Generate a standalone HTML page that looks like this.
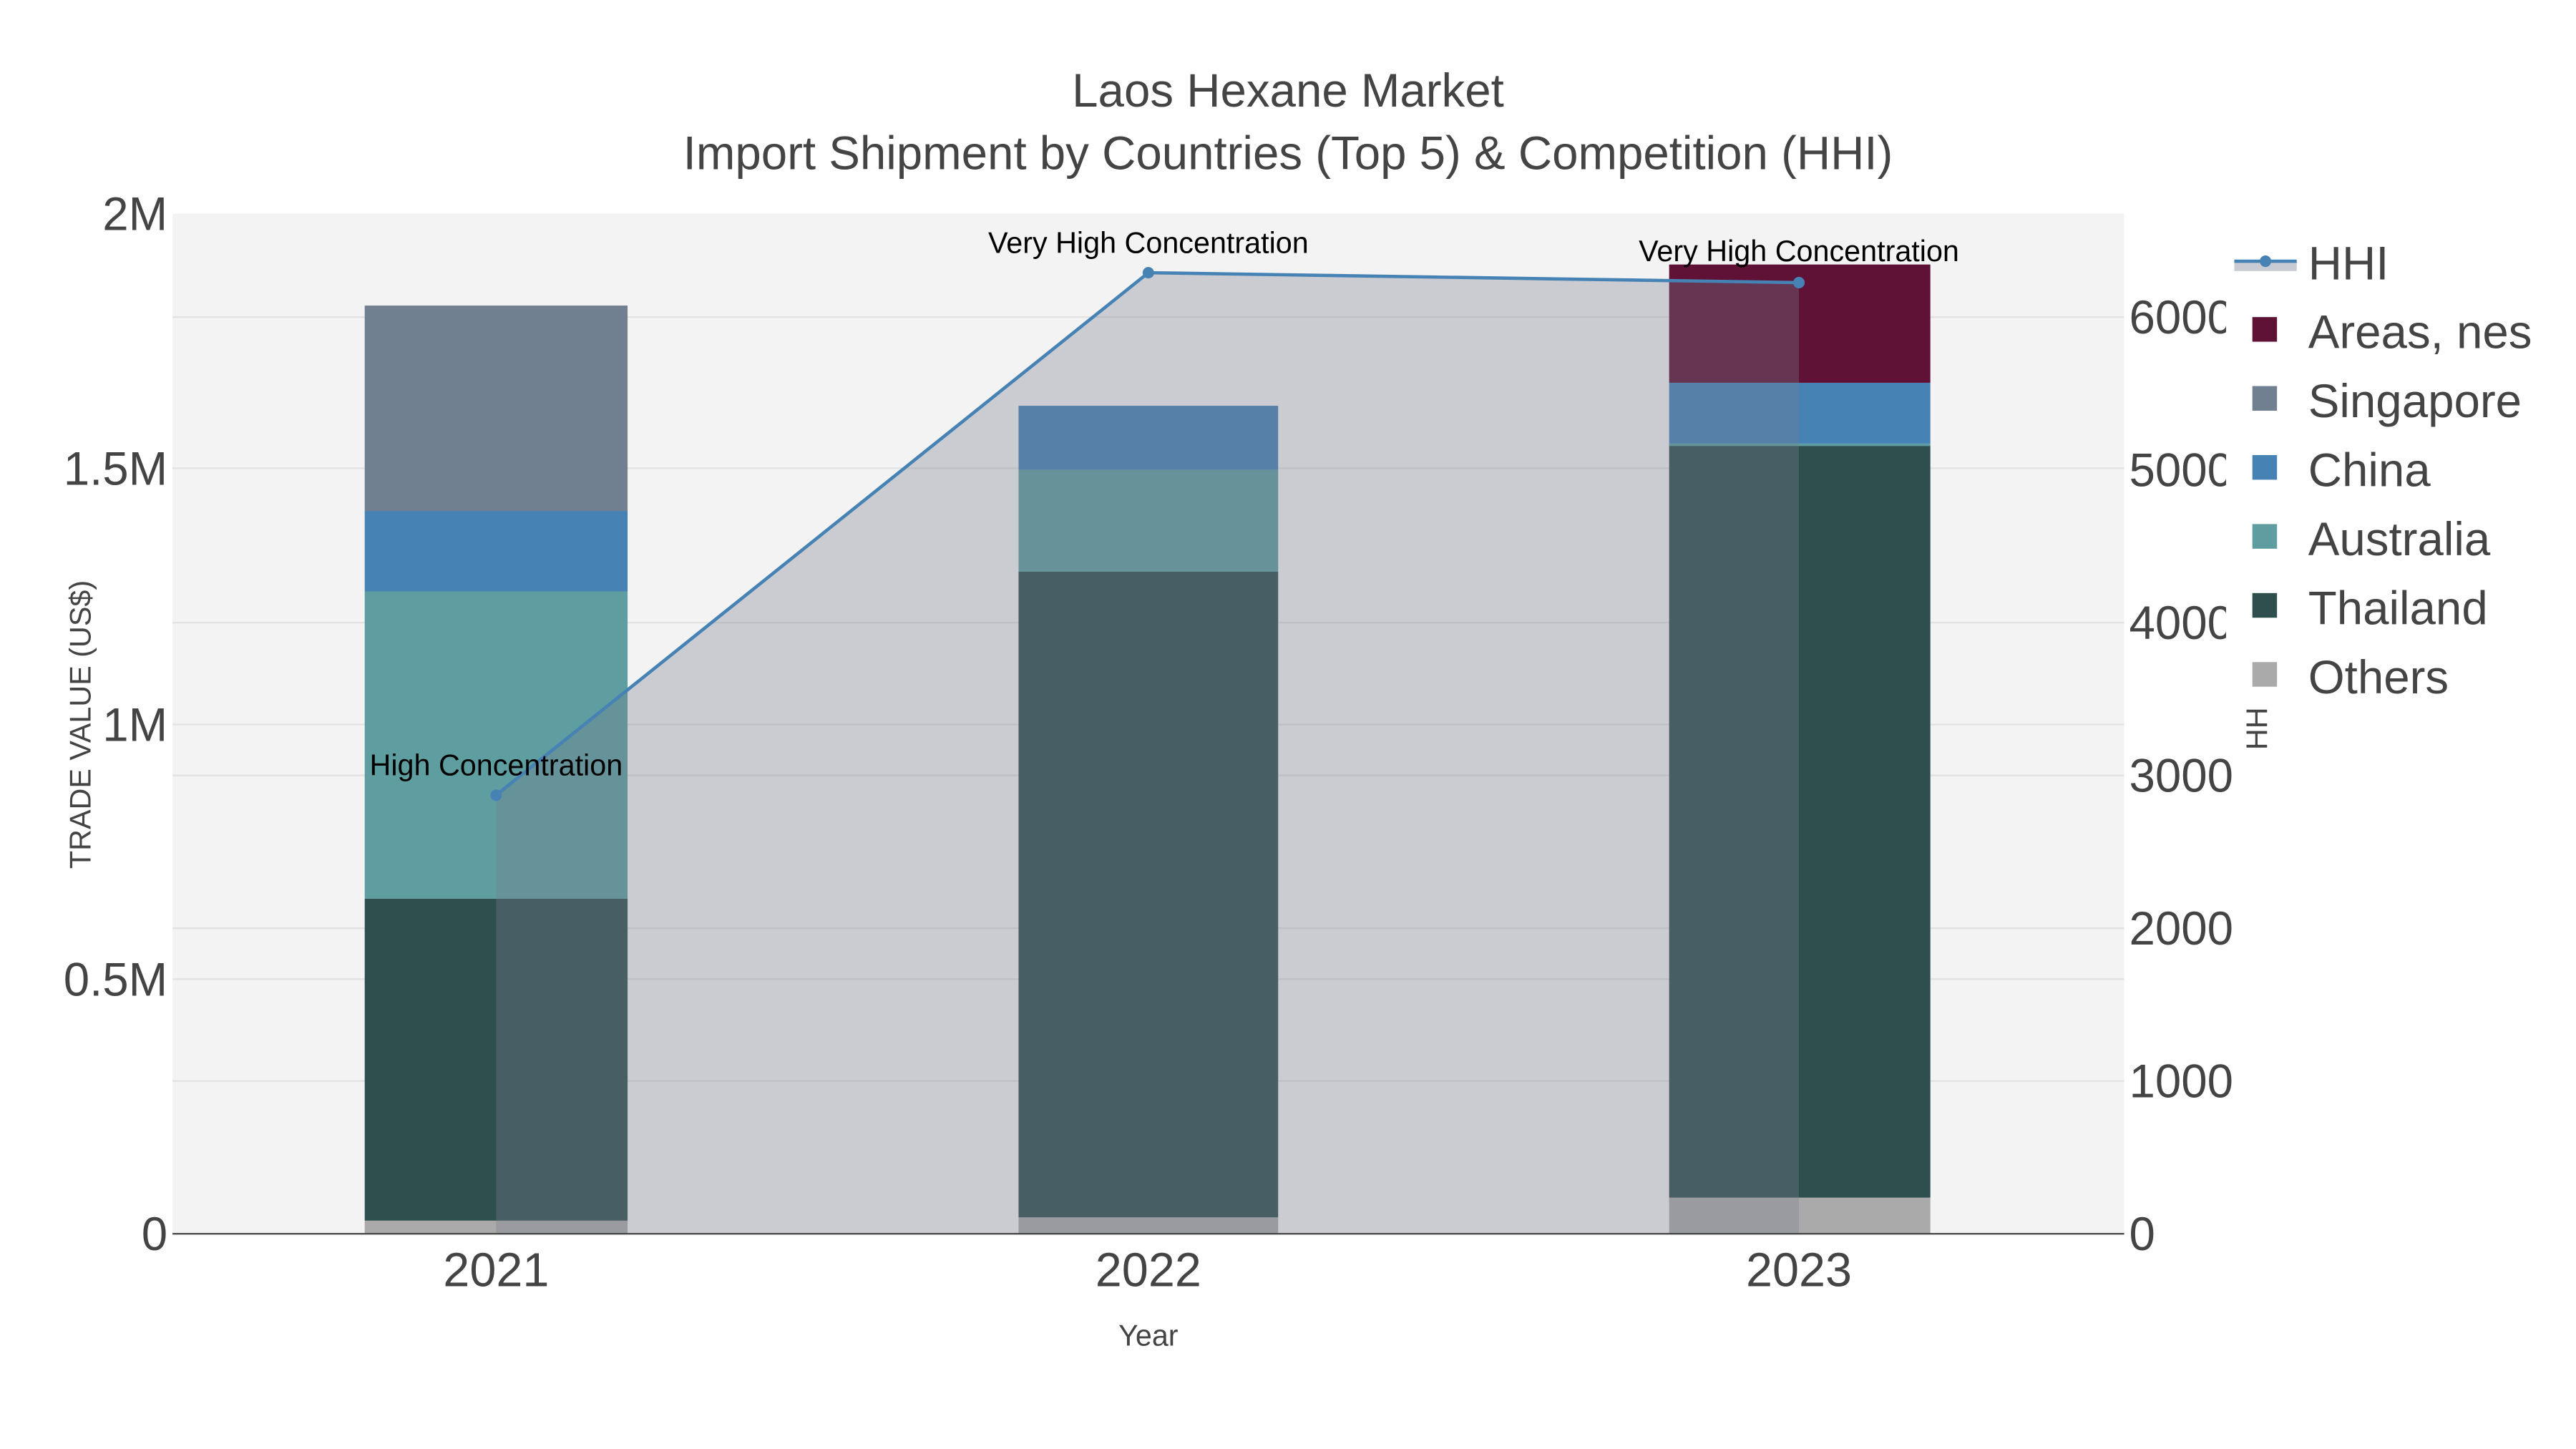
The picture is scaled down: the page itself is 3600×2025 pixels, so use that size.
<!DOCTYPE html>
<html><head><meta charset="utf-8"><style>html,body{margin:0;padding:0;background:#fff}svg{display:block}</style></head>
<body>
<svg width="3600" height="2025" viewBox="0 0 1568 882" xmlns="http://www.w3.org/2000/svg" font-family="Liberation Sans, Arial, sans-serif">
<rect x="0" y="0" width="1568" height="882" fill="#fff"/>
<rect x="105" y="130" width="1188" height="621" fill="#f3f3f3"/>
<g stroke="#e2e2e2" stroke-width="1">
<line x1="105" x2="1293" y1="596" y2="596"/><line x1="105" x2="1293" y1="441" y2="441"/><line x1="105" x2="1293" y1="285" y2="285"/>
<line x1="105" x2="1293" y1="658" y2="658"/><line x1="105" x2="1293" y1="565" y2="565"/><line x1="105" x2="1293" y1="472" y2="472"/><line x1="105" x2="1293" y1="379" y2="379"/><line x1="105" x2="1293" y1="193" y2="193"/>
</g>
<rect x="222" y="743" width="160" height="8" fill="#aaaaaa"/>
<rect x="222" y="547" width="160" height="196" fill="#2f4f4f"/>
<rect x="222" y="360" width="160" height="187" fill="#5f9ea0"/>
<rect x="222" y="311" width="160" height="49" fill="#4682b4"/>
<rect x="222" y="186" width="160" height="125" fill="#708090"/>
<rect x="620" y="741" width="158" height="10" fill="#aaaaaa"/>
<rect x="620" y="348" width="158" height="393" fill="#2f4f4f"/>
<rect x="620" y="286" width="158" height="62" fill="#5f9ea0"/>
<rect x="620" y="247" width="158" height="39" fill="#4682b4"/>
<rect x="1016" y="729" width="159" height="22" fill="#aaaaaa"/>
<rect x="1016" y="271" width="159" height="458" fill="#2f4f4f"/>
<rect x="1016" y="270" width="159" height="1.5" fill="#5f9ea0"/>
<rect x="1016" y="233" width="159" height="37" fill="#4682b4"/>
<rect x="1016" y="161" width="159" height="72" fill="#5f1235"/>
<path d="M302,751 L302,484 L699,166 L1095,172 L1095,751 Z" fill="rgb(119,125,144)" fill-opacity="0.33"/>
<path d="M302,484 L699,166 L1095,172" fill="none" stroke="#4682b4" stroke-width="2"/>
<circle cx="302" cy="484" r="3.5" fill="#4682b4"/><circle cx="699" cy="166" r="3.5" fill="#4682b4"/><circle cx="1095" cy="172" r="3.5" fill="#4682b4"/>
<line x1="105" x2="1293" y1="751" y2="751" stroke="#444" stroke-width="1"/>
<g font-size="18" fill="#000" text-anchor="middle">
<text x="302" y="472">High Concentration</text>
<text x="699" y="154">Very High Concentration</text>
<text x="1095" y="159">Very High Concentration</text>
</g>
<g font-size="28.5" fill="#444" text-anchor="end">
<text x="102" y="761">0</text><text x="102" y="606">0.5M</text><text x="102" y="451">1M</text><text x="102" y="295">1.5M</text><text x="102" y="140">2M</text>
</g>
<g font-size="28.5" fill="#444">
<text x="1296" y="761">0</text><text x="1296" y="668">1000</text><text x="1296" y="575">2000</text><text x="1296" y="482">3000</text><text x="1296" y="389">4000</text><text x="1296" y="296">5000</text><text x="1296" y="203">6000</text>
</g>
<g font-size="29" fill="#444" text-anchor="middle">
<text x="302" y="783">2021</text><text x="699" y="783">2022</text><text x="1095" y="783">2023</text>
</g>
<text x="699" y="819" font-size="18" fill="#444" text-anchor="middle">Year</text>
<text transform="translate(55,441) rotate(-90)" font-size="18" fill="#444" text-anchor="middle">TRADE VALUE (US$)</text>
<text transform="translate(1380,441) rotate(-90)" font-size="18" fill="#444" text-anchor="middle">HHI</text>
<text x="784" y="65" font-size="28.5" fill="#444" text-anchor="middle">Laos Hexane Market</text>
<text x="784" y="103" font-size="28.5" fill="#444" text-anchor="middle">Import Shipment by Countries (Top 5) &amp; Competition (HHI)</text>
<rect x="1355" y="140" width="213" height="290" fill="#fff"/>
<rect x="1360" y="159" width="38" height="6" fill="rgb(119,125,144)" fill-opacity="0.4"/>
<line x1="1360" x2="1398" y1="159" y2="159" stroke="#4682b4" stroke-width="2"/>
<circle cx="1379" cy="159" r="3.5" fill="#4682b4"/>
<rect x="1371" y="193" width="15" height="15" fill="#5f1235"/>
<rect x="1371" y="235" width="15" height="15" fill="#708090"/>
<rect x="1371" y="277" width="15" height="15" fill="#4682b4"/>
<rect x="1371" y="319" width="15" height="15" fill="#5f9ea0"/>
<rect x="1371" y="361" width="15" height="15" fill="#2f4f4f"/>
<rect x="1371" y="403" width="15" height="15" fill="#aaaaaa"/>
<g font-size="28.5" fill="#444">
<text x="1405" y="170">HHI</text><text x="1405" y="212">Areas, nes</text><text x="1405" y="254">Singapore</text><text x="1405" y="296">China</text><text x="1405" y="338">Australia</text><text x="1405" y="380">Thailand</text><text x="1405" y="422">Others</text>
</g>
</svg>
</body></html>
